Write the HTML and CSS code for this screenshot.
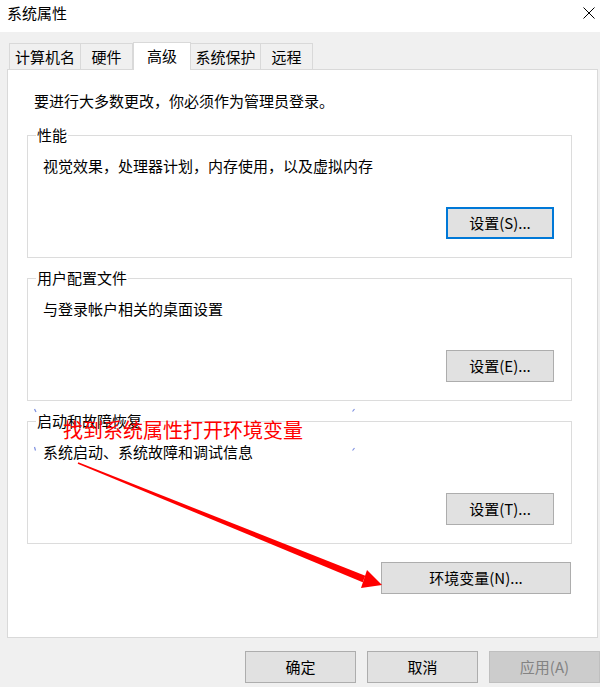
FILE: index.html
```html
<!DOCTYPE html>
<html lang="zh-CN">
<head>
<meta charset="utf-8">
<title>系统属性</title>
<link rel="stylesheet" href="styles.css">
</head>
<body>
<div class="window">
  <div class="titlebar">
    <span class="title">系统属性</span>
    <svg class="close" width="12" height="12" viewBox="0 0 12 12"><path d="M0.5 0.5 L11.5 11.5 M11.5 0.5 L0.5 11.5" stroke="#000" stroke-width="1" fill="none"/></svg>
  </div>
  <div class="tabs">
    <div class="tab t1">计算机名</div>
    <div class="tab t2">硬件</div>
    <div class="tab t3 active">高级</div>
    <div class="tab t4">系统保护</div>
    <div class="tab t5">远程</div>
  </div>
  <div class="panel">
    <p class="intro">要进行大多数更改，你必须作为管理员登录。</p>
    <fieldset class="group">
      <legend>性能</legend>
      <p class="desc">视觉效果，处理器计划，内存使用，以及虚拟内存</p>
      <div class="actions"><button class="btn btn-set focus">设置(S)...</button></div>
    </fieldset>
    <fieldset class="group">
      <legend>用户配置文件</legend>
      <p class="desc">与登录帐户相关的桌面设置</p>
      <div class="actions"><button class="btn btn-set">设置(E)...</button></div>
    </fieldset>
    <fieldset class="group">
      <legend>启动和故障恢复</legend>
      <p class="desc">系统启动、系统故障和调试信息</p>
      <div class="actions"><button class="btn btn-set">设置(T)...</button></div>
    </fieldset>
    <div class="env-row"><button class="btn btn-env">环境变量(N)...</button></div>
  </div>
  <div class="footer">
    <button class="btn btn-foot">确定</button>
    <button class="btn btn-foot">取消</button>
    <button class="btn btn-foot disabled">应用(A)</button>
  </div>

  <svg class="overlay" width="600" height="687" viewBox="0 0 600 687">
    <g stroke="#7d8fe0" stroke-width="1.2" fill="none">
      <path d="M34.5 409 L36 412"/>
      <path d="M354.5 409 L352.5 411.5"/>
      <path d="M34.5 447 L35.5 450.5"/>
      <path d="M354.5 448 L352.5 450.5"/>
    </g>
    <polygon fill="#ff0000" points="78.3,462.3 365.3,575.8 362.7,582.2 77.7,463.7"/>
    <polygon fill="#ff0000" points="367,570 382,585 361,588"/>
  </svg>
  <div class="annotation">找到系统属性打开环境变量</div>
</div>
</body>
</html>
```

FILE: styles.css
```css
* { box-sizing: border-box; }

html, body {
  margin: 0;
  padding: 0;
}

body {
  width: 600px;
  height: 687px;
  overflow: hidden;
  background: #f0f0f0;
  font-family: "Noto Sans CJK SC", "Microsoft YaHei", sans-serif;
  font-size: 15px;
  line-height: 20px;
  color: #000;
}

.window {
  position: relative;
  width: 600px;
  height: 687px;
}

.titlebar {
  height: 32px;
  background: #fff;
  display: flex;
  align-items: flex-start;
  padding: 3px 0 0 7px;
}

.title {
  flex: 1;
}

.close {
  margin: 4px 5px 0 0;
  display: block;
}

.tabs {
  display: flex;
  align-items: flex-end;
  height: 27px;
  margin-top: 10px;
  padding-left: 9px;
}

.tab {
  height: 26px;
  border: 1px solid #d9d9d9;
  border-bottom: none;
  background: #f0f0f0;
  text-align: center;
  line-height: 25px;
  padding-top: 0;
}

.t1 { width: 72px; }
.t2 { width: 53px; margin-left: -1px; }
.t3 { width: 58px; margin-left: 0; }
.t4 { width: 71px; margin-left: -1px; }
.t5 { width: 53px; margin-left: -1px; }

.tab.active {
  height: 28px;
  margin-bottom: -1px;
  background: #fff;
  position: relative;
  z-index: 1;
  line-height: 25px;
  padding-top: 0;
}

.panel {
  margin-left: 7px;
  width: 591px;
  height: 569px;
  background: #fff;
  border: 1px solid #d9d9d9;
  padding-top: 21px;
}

.intro {
  margin: 0 0 14px 0;
  padding-left: 26px;
}

.group {
  margin: 0 0 0 19px;
  width: 545px;
  padding: 0;
  border: 1px solid #dcdcdc;
  min-width: 0;
}

.group + .group {
  margin-top: 10px;
}

.group legend {
  margin-left: 8px;
  padding: 0 1px;
  line-height: 20px;
}

.desc {
  margin: 11px 0 0 0;
  padding-left: 15px;
}

.actions {
  display: flex;
  justify-content: flex-end;
  margin-top: 31px;
  padding: 0 17px 18px 0;
}

.btn {
  font-family: inherit;
  font-size: 15px;
  line-height: 20px;
  color: #000;
  background: #e1e1e1;
  border: 1px solid #adadad;
  height: 32px;
  padding: 0;
  margin: 0;
  display: block;
}

.btn-set {
  width: 108px;
}

.btn.focus {
  border: 2px solid #0078d7;
}

.env-row {
  display: flex;
  justify-content: flex-end;
  margin-top: 18px;
  padding-right: 26px;
}

.btn-env {
  width: 190px;
}

.footer {
  display: flex;
  justify-content: flex-end;
  gap: 11px;
  margin-top: 13px;
}

.btn-foot {
  width: 111px;
}

.btn.disabled {
  background: #cccccc;
  border-color: #bfbfbf;
  color: #838383;
}

.overlay {
  position: absolute;
  left: 0;
  top: 0;
  pointer-events: none;
  z-index: 5;
}

.annotation {
  position: absolute;
  left: 63px;
  top: 419px;
  font-size: 20px;
  line-height: 22px;
  color: #ff0000;
  z-index: 6;
  white-space: nowrap;
}
```
